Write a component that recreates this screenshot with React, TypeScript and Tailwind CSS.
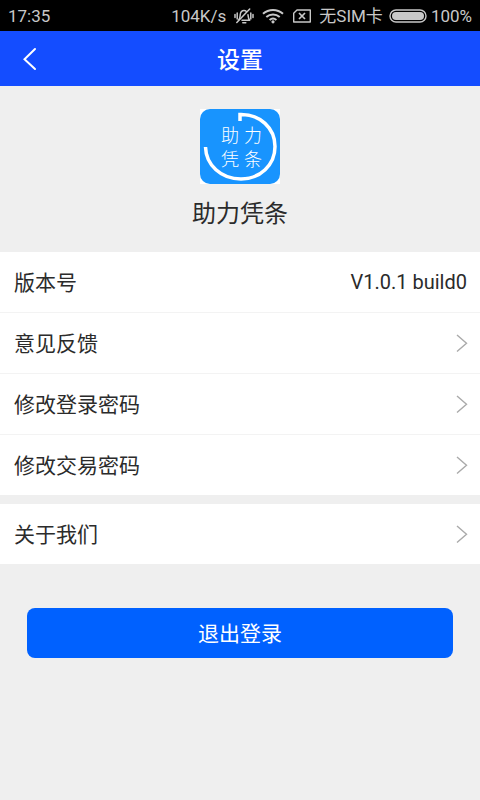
import React from 'react';

function StatusBar() {
  return (
    <div className="flex h-[31px] items-center justify-between bg-black px-2 text-[17px] leading-6 text-[#c8c8c8]">
      <span>17:35</span>
      <div className="flex items-center">
        <span>104K/s</span>
        <svg className="ml-2 h-4 w-5" viewBox="0 0 20 16" fill="none" stroke="currentColor" strokeWidth="1.5" strokeLinecap="round" strokeLinejoin="round">
          <path d="M1 6.500v3M3.200 5v6M19 6.500v3M16.800 5v6" />
          <path d="M4.500 12.200C6.200 10.800 6 8.800 6.200 6.800C6.500 4.200 8 2.600 10 2.600c1 0 1.800.3 2.500.9M14 6.800c.2 2.200.2 4 1.700 5.400H8" />
          <path d="M2.800 14.500L15.700 1M8.800 14.800h3" />
        </svg>
        <svg className="ml-2 h-4 w-[22px]" viewBox="0 0 22 16" fill="none" stroke="currentColor" strokeWidth="2">
          <path d="M1 5.800C6.700.6 15.300.6 21 5.800M4.300 9c3.900-3.400 9.500-3.400 13.400 0M7.600 12c2-1.700 4.800-1.700 6.800 0" />
          <circle cx="11" cy="13.800" r="1.600" fill="currentColor" stroke="none" />
        </svg>
        <svg className="ml-2 h-4 w-5" viewBox="0 0 20 16" fill="none" stroke="currentColor" strokeWidth="1.400">
          <path d="M5 2h13.300v12H1.700V5.300z" strokeLinejoin="round" />
          <path d="M7 5l6 6M13 5l-6 6" strokeWidth="1.700" />
        </svg>
        <span className="ml-[7px]">无SIM卡</span>
        <svg className="ml-[6px] h-[14px] w-[38px]" viewBox="0 0 38 14">
          <rect x="1" y="1" width="36" height="12" rx="6" fill="none" stroke="currentColor" strokeWidth="1.400" />
          <rect x="3" y="3" width="32" height="8" rx="4" fill="currentColor" />
        </svg>
        <span className="ml-1">100%</span>
      </div>
    </div>
  );
}

function AppLogo() {
  return (
    <svg className="h-[75px] w-20 bg-white" viewBox="0 0 80 75" role="img" aria-label="助力凭条">
      <rect width="80" height="75" rx="10" fill="#1894fe" />
      <path d="M40 12V5.500C60 5 75 19 75 37.500C75 56 60 70 41 70C21 70 6 56 5.500 38" fill="none" stroke="#fff" strokeWidth="3.500" />
      <g fill="#fff" fontSize="18" fontFamily="'Liberation Serif', 'Noto Sans CJK SC', serif" fontWeight="300">
        <text x="21" y="33">助</text>
        <text x="44" y="33">力</text>
        <text x="21" y="57">凭</text>
        <text x="44" y="57">条</text>
      </g>
    </svg>
  );
}

function MenuRow({ label }: { label: string }) {
  return (
    <button type="button" className="flex h-[60px] w-full items-center justify-between bg-white pr-3 pl-[14px] text-left">
      <span className="pt-[3px]">{label}</span>
      <svg className="h-5 w-3" viewBox="0 0 12 20" fill="none" stroke="#aaa" strokeWidth="1.400">
        <path d="M1 2l9.500 8.300L1 18.500" />
      </svg>
    </button>
  );
}

export default function App() {
  return (
    <div className="min-h-screen bg-[#efefef] font-['Roboto','Noto_Sans_CJK_SC',sans-serif] text-[#2b2b2b]">
      <StatusBar />

      <header className="grid h-[55px] grid-cols-[60px_1fr_60px] items-center bg-[#144dff] text-white">
        <button type="button" aria-label="返回" className="flex h-full items-center pl-[23px]">
          <svg className="h-6 w-[14px]" viewBox="0 0 14 24" fill="none" stroke="currentColor" strokeWidth="2" strokeLinecap="round">
            <path d="M12 2L1.500 12.300L12 22" />
          </svg>
        </button>
        <h1 className="pt-[6px] text-center text-[23px] font-medium">设置</h1>
      </header>

      <main>
        <section className="flex h-[166px] flex-col items-center pt-[23px]">
          <AppLogo />
          <p className="mt-[14px] text-2xl">助力凭条</p>
        </section>

        <section className="space-y-px bg-[#f3f3f3] text-[21px]">
          <div className="flex h-[60px] items-center justify-between bg-white pr-[13px] pl-[14px]">
            <span className="pt-[3px]">版本号</span>
            <span className="text-[20px]">V1.0.1 build0</span>
          </div>
          <MenuRow label="意见反馈" />
          <MenuRow label="修改登录密码" />
          <MenuRow label="修改交易密码" />
        </section>

        <section className="mt-[9px] text-[21px]">
          <MenuRow label="关于我们" />
        </section>

        <div className="px-[27px] pt-11">
          <button type="button" className="h-[50px] w-full rounded-lg bg-[#0061ff] pt-[3px] text-[21px] text-white">
            退出登录
          </button>
        </div>
      </main>
    </div>
  );
}
